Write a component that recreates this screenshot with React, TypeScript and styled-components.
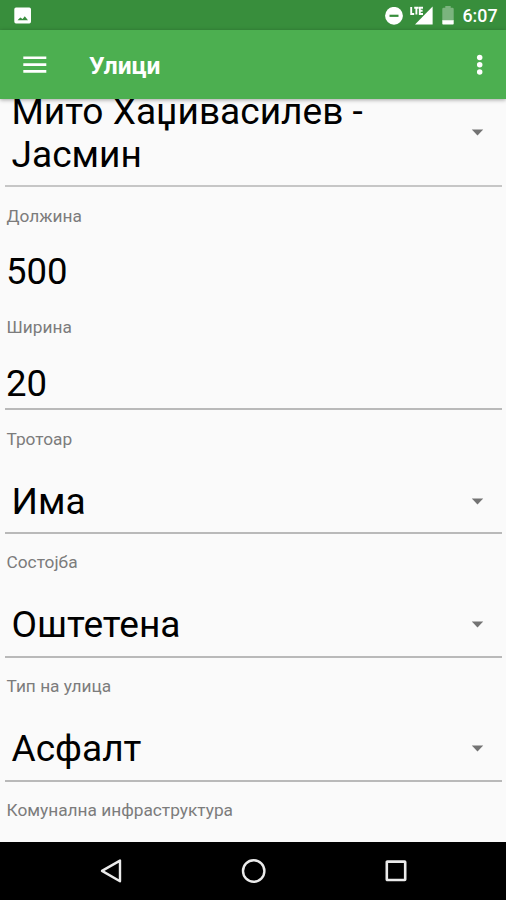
import React from 'react';
import styled, { createGlobalStyle } from 'styled-components';

const GlobalStyle = createGlobalStyle`
  * { box-sizing: border-box; }
  body { margin: 0; background: #fafafa; font-family: Roboto, sans-serif; }
`;

const Screen = styled.div`
  display: flex;
  flex-direction: column;
  width: 506px;
  height: 900px;
  overflow: hidden;
  background: #fafafa;
`;

const StatusBar = styled.div`
  display: flex;
  flex: none;
  align-items: center;
  height: 30px;
  padding: 1px 9px 0 14px;
  background: #388e3c;
  color: #fff;
`;

const StatusIcons = styled.div`
  display: flex;
  align-items: center;
  margin-left: auto;
`;

const StatusIcon = styled.svg<{ $gap?: number }>`
  display: block;
  flex: none;
  margin-right: ${(p) => p.$gap ?? 0}px;
`;

const Clock = styled.span`
  width: 34.5px;
  font-size: 17.8px;
  font-weight: 500;
  line-height: 24px;
  white-space: nowrap;
`;

const AppBar = styled.header`
  display: flex;
  flex: none;
  align-items: center;
  height: 69px;
  padding: 0 22px 0 23px;
  background: #4caf50;
  color: #fff;
  box-shadow: 0 1px 4px rgba(0, 0, 0, 0.35);
  z-index: 1;
`;

const IconButton = styled.button`
  display: flex;
  padding: 0;
  border: 0;
  background: none;
  color: inherit;
`;

const Title = styled.h1`
  flex: 1;
  margin: 2px 0 0 42px;
  font-size: 24.6px;
  font-weight: 700;
  line-height: 30px;
`;

const Form = styled.main`
  flex: 1;
  min-height: 0;
  overflow: hidden;
  padding: 0 4px 0 5px;
`;

const Field = styled.section<{ $height: number; $line?: boolean; $color?: string }>`
  display: flex;
  flex-direction: column;
  height: ${(p) => p.$height}px;
  border-bottom: 2px solid ${(p) => (p.$line === false ? 'transparent' : p.$color ?? '#b9b9b9')};
`;

const Label = styled.label<{ $top?: number }>`
  margin: ${(p) => p.$top ?? 18}px 0 0 1.5px;
  font-size: 17.3px;
  line-height: 21px;
  color: #7c7c7c;
`;

const TextValue = styled.div<{ $top: number }>`
  margin: ${(p) => p.$top}px 0 0 1px;
  font-size: 36.5px;
  line-height: 44px;
  color: #000;
`;

const Spinner = styled.div<{ $top: number }>`
  display: flex;
  align-items: center;
  margin-top: ${(p) => p.$top}px;
  padding: 0 18px 0 6.5px;
`;

const SpinnerValue = styled.div`
  flex: 1;
  font-size: 37.1px;
  line-height: 43px;
  color: #000;
`;

const NavBar = styled.nav`
  display: flex;
  flex: none;
  align-items: center;
  justify-content: space-between;
  height: 58px;
  padding: 0 98px 0 99px;
  background: #000;
`;

const Caret = () => (
  <svg width="13" height="8" viewBox="0 0 13 8">
    <path d="M0.8 0.6H12.2L6.5 6.6Z" fill="#737373" />
  </svg>
);

interface SpinnerFieldProps {
  label: string;
  value: string;
  labelTop?: number;
  valueTop?: number;
}

function SpinnerField({ label, value, labelTop = 18, valueTop = 30 }: SpinnerFieldProps) {
  return (
    <Field $height={124}>
      <Label $top={labelTop}>{label}</Label>
      <Spinner $top={valueTop}>
        <SpinnerValue>{value}</SpinnerValue>
        <Caret />
      </Spinner>
    </Field>
  );
}

export default function App() {
  return (
    <>
      <GlobalStyle />
      <Screen>
        <StatusBar>
          <StatusIcon width="18" height="18" viewBox="0 0 18 18">
            <path
              fillRule="evenodd"
              fill="#fff"
              d="M2 0.5H15.3Q17 0.5 17 2.2V14.5Q17 16.5 15.3 16.5H2Q0.3 16.5 0.3 14.5V2.2Q0.3 0.5 2 0.5ZM3.5 13.3H14L10.8 9.3L8.6 12.1L6.3 10.4Z"
            />
          </StatusIcon>
          <StatusIcons>
            <StatusIcon $gap={7} width="18" height="18" viewBox="0 0 18 18">
              <circle cx="9" cy="8.8" r="8.9" fill="#fff" />
              <rect x="4.5" y="7.7" width="9" height="2.2" fill="#388e3c" />
            </StatusIcon>
            <StatusIcon $gap={9} width="23" height="19" viewBox="0 0 23 19">
              <path d="M5 18.4L22.6 0.6V18.4Z" fill="#fff" />
              <path d="M0 0H13V8.8L11.5 10H0Z" fill="#388e3c" />
              <path
                d="M1.2 1V8H4.2M4.2 1.7H8.6M6.4 1.7V8.6M13 1.7H9.8V8H13M9.8 4.8H12.6"
                fill="none"
                stroke="#fff"
                strokeWidth="1.9"
              />
            </StatusIcon>
            <StatusIcon $gap={9} width="12" height="20" viewBox="0 0 12 20">
              <path d="M0.3 3Q0.3 1.8 1.5 1.8H3.3V0H8.7V1.8H10.5Q11.7 1.8 11.7 3V15H0.3Z" fill="#7bb47e" />
              <path d="M0.3 14.2H11.7V17.8Q11.7 18.5 11 18.5H1Q0.3 18.5 0.3 17.8Z" fill="#fff" />
            </StatusIcon>
            <Clock>6:07</Clock>
          </StatusIcons>
        </StatusBar>
        <AppBar>
          <IconButton aria-label="Menu">
            <svg width="24" height="18" viewBox="0 0 24 18">
              <path d="M0.3 1.8H23.3M0.3 8.6H23.3M0.3 15.4H23.3" stroke="#fff" strokeWidth="2.6" />
            </svg>
          </IconButton>
          <Title>Улици</Title>
          <IconButton aria-label="More">
            <svg width="8" height="22" viewBox="0 0 8 22">
              <g fill="#fff">
                <circle cx="3.7" cy="3.5" r="2.75" />
                <circle cx="3.7" cy="10.7" r="2.75" />
                <circle cx="3.7" cy="17.9" r="2.75" />
              </g>
            </svg>
          </IconButton>
        </AppBar>
        <Form>
          <Field $height={88} $color="#c6c6c6">
            <Spinner $top={-9}>
              <SpinnerValue>
                Мито Хаџивасилев -<br />
                Јасмин
              </SpinnerValue>
              <Caret />
            </Spinner>
          </Field>
          <Field $height={111} $line={false}>
            <Label $top={19}>Должина</Label>
            <TextValue $top={23}>500</TextValue>
          </Field>
          <Field $height={112}>
            <Label $top={19}>Ширина</Label>
            <TextValue $top={24}>20</TextValue>
          </Field>
          <SpinnerField label="Тротоар" value="Има" labelTop={19} valueTop={30} />
          <SpinnerField label="Состојба" value="Оштетена" />
          <SpinnerField label="Тип на улица" value="Асфалт" />
          <Label as="div">Комунална инфраструктура</Label>
        </Form>
        <NavBar>
          <IconButton aria-label="Back">
            <svg width="24" height="26" viewBox="0 0 24 26">
              <path d="M21 2.6V23.2L3 12.9Z" fill="none" stroke="#ebebeb" strokeWidth="2.4" strokeLinejoin="round" />
            </svg>
          </IconButton>
          <IconButton aria-label="Home">
            <svg width="26" height="26" viewBox="0 0 26 26">
              <circle cx="12.7" cy="13" r="10.7" fill="none" stroke="#ebebeb" strokeWidth="2.4" />
            </svg>
          </IconButton>
          <IconButton aria-label="Recent apps">
            <svg width="24" height="24" viewBox="0 0 24 24">
              <rect x="2.8" y="2.6" width="18.4" height="18.4" rx="0.5" fill="none" stroke="#ebebeb" strokeWidth="2.6" />
            </svg>
          </IconButton>
        </NavBar>
      </Screen>
    </>
  );
}
